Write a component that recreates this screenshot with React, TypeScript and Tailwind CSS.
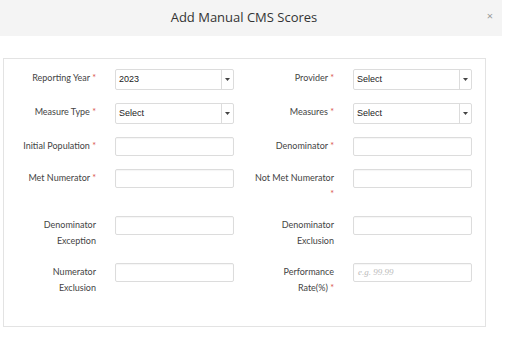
import { ReactNode } from 'react'

const labelCls = "w-[80px] shrink-0 text-right text-[9px] leading-[16px] pt-[1px] text-[#444] whitespace-nowrap"
const inputCls = "w-[119px] h-[19px] border border-[#dcdcdc] rounded-[2px] bg-white shadow-[inset_0_1px_1px_rgba(0,0,0,0.04)]"

function Req() {
  return <span className="text-[#d9534f]"> *</span>
}

function SelectBox({ value }: { value: string }) {
  return (
    <div className="w-[119px] h-[21px] border border-[#dcdcdc] rounded-[2px] bg-white flex items-center">
      <span className="flex-1 pl-[3px] text-[9px] text-[#222]" style={{ fontFamily: '"Liberation Sans", Arial, sans-serif' }}>{value}</span>
      <div className="w-[12px] h-full border-l border-[#dcdcdc] flex items-center justify-center">
        <svg width="5" height="3" viewBox="0 0 5 3"><path d="M0 0h5L2.5 3z" fill="#444" /></svg>
      </div>
    </div>
  )
}

function Field({ label, children, className = '' }: { label: ReactNode; children: ReactNode; className?: string }) {
  return (
    <div className={"flex items-start " + className}>
      <div className={labelCls} style={{ fontFamily: 'Lato, "Open Sans", sans-serif' }}>{label}</div>
      <div className="ml-[19px]">{children}</div>
    </div>
  )
}

export default function App() {
  return (
    <div className="w-[510px] h-[342px] bg-white" style={{ fontFamily: '"Open Sans", sans-serif' }}>
      <div className="w-[502px] h-[36px] bg-[#f4f4f4] flex items-center relative">
        <h3 className="w-full text-center pr-[14px] text-[13px] text-[#333]">Add Manual CMS Scores</h3>
        <span className="absolute right-[9px] top-[8px] text-[11px] text-[#999]">×</span>
      </div>

      <div className="mt-[22px] ml-[3px] w-[483px] h-[269px] border border-[#e3e3e3] pl-[12px] pt-[10px]">
        <div className="grid grid-cols-[238px_238px] gap-y-[13px]">
          <Field label={<>Reporting Year<Req /></>}><SelectBox value="2023" /></Field>
          <Field label={<>Provider<Req /></>}><SelectBox value="Select" /></Field>

          <Field label={<>Measure Type<Req /></>}><SelectBox value="Select" /></Field>
          <Field label={<>Measures<Req /></>}><SelectBox value="Select" /></Field>

          <Field label={<>Initial Population<Req /></>}><div className={inputCls} /></Field>
          <Field label={<>Denominator<Req /></>}><div className={inputCls} /></Field>

          <Field label={<>Met Numerator<Req /></>}><div className={inputCls} /></Field>
          <Field label={<>Not Met Numerator<br /><span className="text-[#d9534f]">*</span></>} className="mb-[1px]"><div className={inputCls} /></Field>

          <Field label={<>Denominator<br />Exception</>} className="mb-[1px]"><div className={inputCls} /></Field>
          <Field label={<>Denominator<br />Exclusion</>}><div className={inputCls} /></Field>

          <Field label={<>Numerator<br />Exclusion</>}><div className={inputCls} /></Field>
          <Field label={<>Performance<br />Rate(%)<Req /></>}>
            <div className={inputCls + " flex items-center pl-[4px]"}>
              <span className="text-[9px] italic text-[#bbb]" style={{ fontFamily: '"Liberation Serif", serif' }}>e.g. 99.99</span>
            </div>
          </Field>
        </div>
      </div>
    </div>
  )
}
